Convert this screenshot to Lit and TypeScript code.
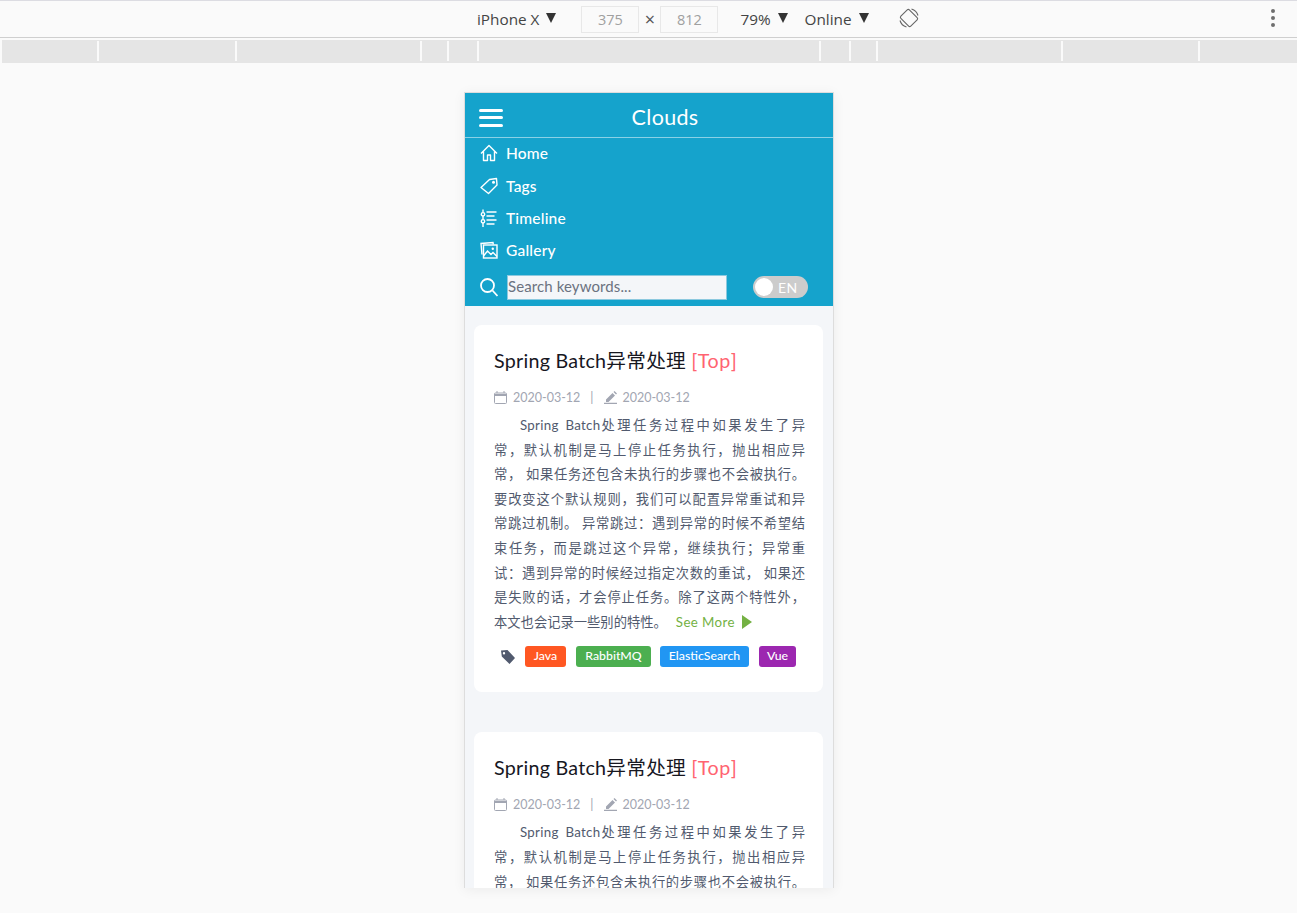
import { LitElement, html, css, svg } from 'lit';
import { customElement } from 'lit/decorators.js';

const LEAD = '处理任务过程中如果发生了异';

const BODY = [
  '常，默认机制是马上停止任务执行，抛出相应异',
  '常， 如果任务还包含未执行的步骤也不会被执行。',
  '要改变这个默认规则，我们可以配置异常重试和异',
  '常跳过机制。 异常跳过：遇到异常的时候不希望结',
  '束任务，而是跳过这个异常，继续执行；异常重',
  '试：遇到异常的时候经过指定次数的重试， 如果还',
  '是失败的话，才会停止任务。除了这两个特性外，',
];

const TAGS = [
  { name: 'Java', cls: 'java' },
  { name: 'RabbitMQ', cls: 'rabbit' },
  { name: 'ElasticSearch', cls: 'elastic' },
  { name: 'Vue', cls: 'vue' },
];

const NAV = [
  {
    name: 'Home',
    icon: svg`<path d="M1 9.500 9 1.500l8 8M3.500 7.500v9h4V11h3v5.500h4v-9" stroke-linejoin="round"/>`,
  },
  {
    name: 'Tags',
    icon: svg`<path d="M1 10.500 9.500 2.500l7-1 .5 6.500-8.500 8.500z" stroke-linejoin="round"/><circle cx="13.500" cy="5.300" r="1.500" fill="#fff" stroke="none"/>`,
  },
  {
    name: 'Timeline',
    icon: svg`<path d="M3 0.500v3M3 7v3.500M3 14v4M6.500 3h10M6.500 7h8M6.500 11h10M6.500 15h8"/><circle cx="3" cy="5.300" r="1.700"/><circle cx="3" cy="12.300" r="1.700"/>`,
  },
  {
    name: 'Gallery',
    icon: svg`<path d="M2 13.500 1 2.500l12-1 .3 2"/><rect x="3.500" y="4" width="13.500" height="13"/><path d="m3.500 15 4-5 3.500 3.500 2-2 4 4"/><circle cx="12.800" cy="7.800" r="1.200" fill="#fff" stroke="none"/>`,
  },
];

@customElement('app-root')
export class AppRoot extends LitElement {
  static styles = css`
    :host {
      display: block;
      height: 913px;
      overflow: hidden;
      background: #fafafa;
      font-family: Lato, 'Noto Sans CJK SC', sans-serif;
    }
    .toolbar {
      box-sizing: border-box;
      border-top: 1px solid #dcdce2;
      border-bottom: 1px solid #cfcfcf;
      height: 38px;
      display: flex;
      align-items: center;
      padding: 0 22px 0 477px;
      font: 15.300px 'Open Sans', sans-serif;
      color: #444;
    }
    .caret {
      width: 0;
      height: 0;
      border-left: 5.500px solid transparent;
      border-right: 5.500px solid transparent;
      border-top: 10px solid #333;
      margin: -3px 0 0 7px;
    }
    .size {
      width: 58px;
      height: 27px;
      box-sizing: border-box;
      border: 1px solid #e8e8e8;
      display: flex;
      align-items: center;
      justify-content: center;
      color: #a0a0a0;
      font-size: 14.500px;
    }
    .first-size { margin-left: 25px; }
    .times { width: 21px; text-align: center; color: #555; font-size: 18px; }
    .zoom { margin-left: 22px; }
    .online { margin-left: 17px; }
    .rotate { margin-left: 30px; display: block; margin-top: -3px; }
    .dots {
      margin-left: auto;
      display: flex;
      flex-direction: column;
      gap: 3px;
      margin-top: -2px;
    }
    .dots i {
      width: 4px;
      height: 4px;
      border-radius: 50%;
      background: #6e6e6e;
    }
    .ruler {
      margin: 2px 0 0 2px;
      height: 23px;
      box-sizing: border-box;
      padding: 1px 0 2px;
      background: #e5e5e5;
      display: grid;
      grid-template-columns: 95px 2px 136px 2px 183px 2px 25px 2px 28px 2px 340px 2px 28px 2px 25px 2px 183px 2px 135px 2px 1fr;
    }
    .ruler b:nth-child(even) { background: #fafafa; }
    .stage {
      display: flex;
      justify-content: center;
      padding-top: 29px;
    }
    .phone {
      width: 368px;
      height: 795px;
      overflow: hidden;
      border: 1px solid #ddd;
      border-bottom: 0;
      margin-left: 1px;
      background: #f4f6f9;
      box-shadow: 0 2px 12px rgba(0, 0, 0, 0.06);
    }
    .nav {
      background: #15a3cc;
      color: #fff;
      height: 213px;
    }
    .head {
      height: 44px;
      display: flex;
      align-items: center;
      padding: 0 6px 0 14px;
      border-bottom: 1px solid rgba(255, 255, 255, 0.5);
    }
    .burger {
      width: 24px;
      display: flex;
      flex-direction: column;
      gap: 4.500px;
      margin-top: 5px;
    }
    .burger i {
      height: 3px;
      border-radius: 2px;
      background: #fff;
    }
    .brand {
      flex: 1;
      text-align: center;
      font-size: 21.500px;
      padding-top: 3px;
      letter-spacing: 0.300px;
    }
    .item {
      height: 32.400px;
      box-sizing: border-box;
      padding: 0 0 2px 15px;
      display: flex;
      align-items: center;
      font-size: 15.500px;
      font-weight: 500;
      letter-spacing: 0.200px;
    }
    .item svg {
      width: 18px;
      height: 18px;
      margin-right: 8px;
      fill: none;
      stroke: #fff;
      stroke-width: 1.400;
    }
    .search {
      display: flex;
      align-items: center;
      height: 40px;
      padding: 0 0 1px 15px;
      box-sizing: border-box;
    }
    .search svg { display: block; margin-right: 9px; }
    .input {
      width: 220px;
      height: 25px;
      box-sizing: border-box;
      border: 1px solid #8cc9df;
      background: #f4f6f9;
      color: #6b7280;
      font-size: 15px;
      line-height: 20px;
      padding-left: 0;
      letter-spacing: 0.100px;
    }
    .toggle {
      width: 55px;
      height: 22px;
      margin-left: 26px;
      border-radius: 11px;
      background: #ccc;
      display: flex;
      align-items: center;
      padding-left: 2px;
      box-sizing: border-box;
      font-size: 14px;
      letter-spacing: 0.500px;
    }
    .toggle i {
      width: 18px;
      height: 18px;
      border-radius: 50%;
      background: #fff;
      margin-right: 5px;
    }
    .posts {
      display: flex;
      flex-direction: column;
      gap: 40px;
      padding: 19px 10px 0 9px;
    }
    .card {
      background: #fff;
      border-radius: 8px;
      padding: 22px 18px 25px 20px;
    }
    .title {
      font-size: 19.700px;
      line-height: 28px;
      color: #17171f;
      letter-spacing: 0.250px;
    }
    .top { color: #ff6370; letter-spacing: 0.500px; }
    .meta {
      display: flex;
      align-items: center;
      height: 20px;
      margin-top: 12px;
      font-size: 12.500px;
      color: #a2a6b2;
    }
    .meta svg { display: block; margin-right: 6px; }
    .sep { margin: 0 11px 0 10px; }
    .date { margin-left: -1px; }
    .body {
      margin-top: 6px;
      color: #515a6e;
      font-size: 13.300px;
      line-height: 24.600px;
    }
    .line {
      text-align: justify;
      text-align-last: justify;
      white-space: nowrap;
    }
    .lead {
      display: flex;
      padding-left: 26px;
    }
    .latin {
      letter-spacing: 0.300px;
      word-spacing: 3px;
      margin-right: 1px;
    }
    .rest {
      flex: 1;
      text-align: justify;
      text-align-last: justify;
    }
    .more {
      color: #74b143;
      margin-left: 9px;
      letter-spacing: 0.400px;
    }
    .arrow {
      display: inline-block;
      width: 0;
      height: 0;
      border-top: 7px solid transparent;
      border-bottom: 7px solid transparent;
      border-left: 10px solid #74b143;
      margin-left: 7px;
      vertical-align: -2px;
    }
    .tags {
      display: flex;
      align-items: center;
      gap: 10px;
      margin-top: 12px;
      padding-left: 7px;
    }
    .tags svg { display: block; }
    .tag {
      height: 21px;
      box-sizing: border-box;
      padding-bottom: 2px;
      border-radius: 3px;
      display: flex;
      align-items: center;
      justify-content: center;
      color: #fff;
      font-size: 12.300px;
      font-weight: 500;
    }
    .java { background: #ff5722; width: 41px; }
    .rabbit { background: #4caf50; width: 75px; }
    .elastic { background: #2196f3; width: 89px; margin-left: -1px; }
    .vue { background: #9c27b0; width: 37px; }
  `;

  private card() {
    return html`
      <article class="card">
        <div class="title">Spring Batch异常处理 <span class="top">[Top]</span></div>
        <div class="meta">
          <svg width="13" height="13" viewBox="0 0 13 13" fill="none" stroke="#a2a6b2">
            <rect x="0.500" y="2" width="12" height="10.500" rx="1" />
            <path d="M0.500 3.500h12M0.500 4.500h12M3 0v2M10 0v2" />
          </svg>
          2020-03-12
          <span class="sep">|</span>
          <svg width="13" height="13" viewBox="0 0 13 13" fill="#a2a6b2">
            <path d="M2 8.500 8.500 2l2.500 2.500L4.500 11H2zM9.500 1 10.500 0 13 2.500 12 3.500zM0 11.800h13V13H0z" />
          </svg>
          <span class="date">2020-03-12</span>
        </div>
        <div class="body">
          <div class="lead"><span class="latin">Spring Batch</span><span class="rest">${LEAD}</span></div>
          ${BODY.map((l) => html`<div class="line">${l}</div>`)}
          <div>本文也会记录一些别的特性。<span class="more">See More</span><span class="arrow"></span></div>
        </div>
        <div class="tags">
          <svg width="14" height="15" viewBox="0 0 14 15" fill="#515a6e">
            <path d="M0 1.500 6.500 1 14 9l-5.500 6L0.800 7.500zM3 3a1.200 1.200 0 1 0 0 2.400A1.200 1.200 0 0 0 3 3z" fill-rule="evenodd" />
          </svg>
          ${TAGS.map((t) => html`<span class="tag ${t.cls}">${t.name}</span>`)}
        </div>
      </article>
    `;
  }

  render() {
    return html`
      <div class="toolbar">
        <span>iPhone X</span><span class="caret"></span>
        <span class="size first-size">375</span>
        <span class="times">×</span>
        <span class="size">812</span>
        <span class="zoom">79%</span><span class="caret"></span>
        <span class="online">Online</span><span class="caret"></span>
        <svg class="rotate" width="20" height="20" viewBox="0 0 20 20" fill="none" stroke="#666" stroke-width="1.100">
          <rect x="4" y="3" width="12" height="14" rx="1.500" transform="rotate(-45 10 10)" />
          <path d="M12.500 1A9.500 9.500 0 0 1 19 7.500M7.500 19A9.500 9.500 0 0 1 1 12.500" />
        </svg>
        <div class="dots"><i></i><i></i><i></i></div>
      </div>
      <div class="ruler">
        ${Array.from({ length: 21 }, () => html`<b></b>`)}
      </div>
      <div class="stage">
        <div class="phone">
          <header class="nav">
            <div class="head">
              <div class="burger"><i></i><i></i><i></i></div>
              <div class="brand">Clouds</div>
            </div>
            ${NAV.map(
              (n) => html`<div class="item"><svg viewBox="0 0 18 18">${n.icon}</svg>${n.name}</div>`
            )}
            <div class="search">
              <svg width="18" height="19" viewBox="0 0 18 19" fill="none" stroke="#fff" stroke-width="1.800">
                <circle cx="7.500" cy="7.500" r="6.500" />
                <path d="m12.500 12.500 5 5.500" />
              </svg>
              <div class="input">Search keywords...</div>
              <div class="toggle"><i></i>EN</div>
            </div>
          </header>
          <div class="posts">${this.card()}${this.card()}</div>
        </div>
      </div>
    `;
  }
}
